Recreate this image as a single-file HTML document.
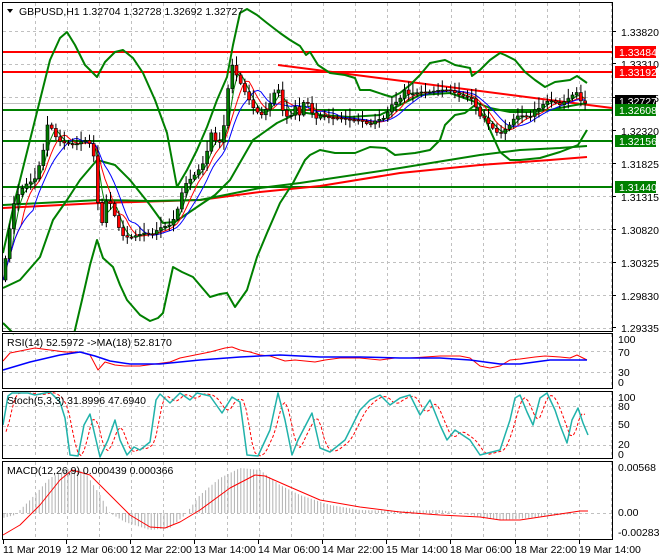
<!DOCTYPE html>
<html><head><meta charset="utf-8"><style>
body{margin:0;background:#fff;width:660px;height:560px;overflow:hidden;font-family:"Liberation Sans",sans-serif}
svg{display:block}
text{font-family:"Liberation Sans",sans-serif;font-size:10.5px;fill:#000}
</style></head><body>
<svg id="s" width="660" height="560" xmlns="http://www.w3.org/2000/svg">
<rect width="660" height="560" fill="#fff"/>
<g id="grid" stroke="#c0c0c0" stroke-dasharray="3,3" stroke-width="1"></g>
<g id="main"></g>
<g fill="none" stroke="#000" stroke-width="1">
<rect x="2.5" y="2.5" width="610" height="329"/>
<rect x="2.5" y="333.5" width="610" height="55"/>
<rect x="2.5" y="391.5" width="610" height="67"/>
<rect x="2.5" y="461.5" width="610" height="78"/>
</g>
<rect x="0" y="332" width="612" height="1" fill="#fff"/>
<polygon points="7,9 13,9 10,13" fill="#000"/>
<text x="19" y="15">GBPUSD,H1  1.32704 1.32728 1.32692 1.32727</text>
<text x="7" y="346">RSI(14) 52.5972  -&gt;MA(18) 52.8170</text>
<text x="7" y="404">Stoch(5,3,3) 31.8996 47.6940</text>
<text x="7" y="474">MACD(12,26,9) 0.000439 0.000366</text>
<g id="axis"></g>
</svg>
<script>
const S=document.getElementById('s'),NS='http://www.w3.org/2000/svg';
function el(t,a,p){const e=document.createElementNS(NS,t);for(const k in a)e.setAttribute(k,a[k]);(p||S).appendChild(e);return e}
function pl(pts,c,w,extra){const a={points:pts.map(p=>p.join(',')).join(' '),fill:'none',stroke:c,'stroke-width':w||1,'stroke-linejoin':'round'};Object.assign(a,extra||{});return el('polyline',a,document.getElementById('main'))}
function interp(pts,x){for(let i=0;i<pts.length-1;i++){if(x>=pts[i][0]&&x<=pts[i+1][0]){const t=(x-pts[i][0])/(pts[i+1][0]-pts[i][0]||1);return pts[i][1]+t*(pts[i+1][1]-pts[i][1])}}return pts[pts.length-1][1]}
const g=document.getElementById('grid');
for(let x=35;x<612;x+=32){el('line',{x1:x+.5,y1:3,x2:x+.5,y2:331},g);el('line',{x1:x+.5,y1:334,x2:x+.5,y2:388},g);el('line',{x1:x+.5,y1:392,x2:x+.5,y2:458},g);el('line',{x1:x+.5,y1:462,x2:x+.5,y2:539},g)}
[31,64,97,130,163,196,229,262,295,328].forEach(y=>el('line',{x1:3,y1:y+.5,x2:612,y2:y+.5},g));
[351,372].forEach(y=>el('line',{x1:3,y1:y+.5,x2:612,y2:y+.5},g));
[406,426,445].forEach(y=>el('line',{x1:3,y1:y+.5,x2:612,y2:y+.5},g));
el('line',{x1:3,y1:513.5,x2:612,y2:513.5},g);
const hk=[[3,518],[15,515],[30,500],[50,478],[70,468],[85,472],[100,495],[110,513],[125,522],[150,530],[170,528],[185,515],[200,495],[220,478],[240,468],[260,470],[280,485],[300,495],[330,505],[360,510],[400,511],[440,510],[470,515],[500,520],[530,518],[560,515],[588,513]];
const m=document.getElementById('main');
for(let x=4;x<=588;x+=3.2){const y=interp(hk,x);el('line',{x1:x,y1:513,x2:x,y2:y,stroke:'#b0b0b0','stroke-width':1},m)}
[[52,'#f00'],[72,'#f00']].forEach(a=>el('line',{x1:3,y1:a[0],x2:612,y2:a[0],stroke:a[1],'stroke-width':2},m));
el('line',{x1:3,y1:103.5,x2:612,y2:103.5,stroke:'#c0c0c0','stroke-width':1},m);
[110,141,187].forEach(y=>el('line',{x1:3,y1:y,x2:612,y2:y,stroke:'#008000','stroke-width':2},m));
pl([[3,208],[100,203],[200,200],[260,192],[320,186],[400,173],[480,165],[550,160],[587,157]],'#f00',2);
pl([[3,205],[100,200],[150,201],[200,200],[260,188],[300,183],[400,168],[480,155],[520,150],[560,148],[587,146]],'#008000',2);
pl([[278,65],[612,108]],'#f00',2);
pl([[3,253],[15,200],[30,140],[40,100],[50,60],[60,38],[67,32],[75,45],[85,65],[97,77],[105,62],[115,52],[123,50],[133,58],[143,73],[155,100],[167,133],[172,160],[177,187],[187,170],[197,150],[207,127],[217,100],[227,77],[233,45],[240,13],[247,9],[257,15],[267,23],[280,33],[290,40],[300,46],[306,55],[310,52],[318,65],[330,73],[345,75],[355,78],[360,90],[370,90],[385,95],[392,97],[400,93],[410,85],[420,75],[430,63],[445,60],[455,65],[470,68],[472,76],[480,70],[490,60],[500,53],[505,55],[515,60],[525,72],[535,80],[545,87],[555,82],[570,80],[577,76],[587,83]],'#008000',2);
pl([[3,323],[10,330],[14,334]],'#008000',2);
pl([[74,334],[82,300],[90,265],[97,240],[103,258],[113,267],[120,285],[127,300],[140,315],[150,321],[158,318],[163,313],[168,290],[173,267],[182,272],[193,277],[210,297],[220,294],[227,293],[235,307],[247,290],[257,257],[267,233],[280,203],[293,183],[305,160],[310,155],[320,150],[335,153],[355,153],[370,147],[385,148],[395,155],[415,153],[430,150],[440,140],[445,125],[455,115],[465,113],[475,105],[485,118],[490,130],[500,152],[510,160],[520,160],[540,158],[560,152],[578,145],[587,130]],'#008000',2);
pl([[3,288],[20,280],[40,257],[53,220],[67,200],[80,180],[97,160],[115,165],[130,180],[150,205],[163,223],[175,222],[200,205],[215,195],[230,180],[253,140],[277,123],[300,112],[320,115],[350,117],[380,115],[400,105],[420,95],[450,93],[470,100],[490,108],[510,112],[530,112],[550,110],[570,106],[587,103]],'#008000',2);
const P=[[3,280],[10,230],[15,200],[25,185],[35,180],[43,155],[48,125],[52,128],[58,140],[65,143],[75,145],[85,140],[92,145],[97,170],[100,240],[103,220],[108,195],[115,215],[122,235],[130,238],[138,235],[145,233],[152,235],[160,228],[170,225],[177,215],[180,200],[185,185],[195,175],[203,165],[208,150],[212,132],[218,145],[222,140],[227,110],[230,70],[233,65],[237,75],[242,85],[247,95],[255,110],[262,115],[270,105],[278,85],[283,110],[290,120],[295,105],[300,115],[305,100],[310,105],[315,120],[320,115],[330,118],[340,118],[350,120],[360,120],[370,125],[377,120],[385,118],[392,105],[400,100],[405,90],[410,95],[420,92],[430,92],[440,90],[450,90],[460,95],[470,98],[475,100],[478,115],[485,118],[490,125],[495,130],[500,135],[505,130],[510,125],[515,118],[520,115],[530,118],[535,110],[540,108],[545,103],[550,100],[555,102],[560,105],[567,100],[573,95],[577,92],[580,100],[585,103]];
const ma=(d)=>{const r=[];for(let x=3;x<=587;x+=3){let s=0,n=0;for(let k=0;k<d;k++){const xx=x-k*3;if(xx<3)break;s+=interp(P,xx);n++}r.push([x,s/n])}return r};
pl(ma(4),'#008000',1);pl(ma(7),'#f00',1);pl(ma(11),'#00f',1);
let prev=interp(P,3);
for(let x=4;x<=586;x+=4.2){const c=interp(P,x+2);const o=prev;const top=Math.min(o,c),bot=Math.max(o,c);const wick=2+((x*7)%9);
el('line',{x1:x+1.5,y1:top-wick,x2:x+1.5,y2:bot+wick*0.7,stroke:'#000','stroke-width':1},m);
el('rect',{x:x,y:top,width:3,height:Math.max(1,bot-top),fill:c<o?'#007a00':'#f00',stroke:'#000','stroke-width':.6},m);prev=c}
pl([[3,361],[10,353],[25,350],[35,348],[50,350],[65,352],[80,352],[90,355],[98,370],[105,362],[115,365],[125,366],[140,366],[155,364],[170,362],[180,358],[190,356],[200,354],[210,352],[225,348],[232,347],[240,350],[250,352],[260,355],[270,356],[285,361],[295,360],[305,361],[315,362],[325,360],[340,358],[360,358],[380,360],[395,358],[410,358],[425,357],[440,356],[460,356],[470,358],[480,366],[490,368],[500,366],[510,360],[520,359],[535,357],[545,356],[560,357],[570,358],[577,355],[587,360]],'#f00',1);
pl([[3,370],[30,362],[60,355],[80,352],[95,356],[110,361],[130,364],[160,364],[200,360],[240,357],[280,355],[320,357],[360,357],[400,358],[440,358],[470,360],[500,364],[520,364],[550,360],[587,360]],'#00f',1.5);
const st=[[3,425],[8,396],[12,393],[28,393],[35,395],[50,392],[60,402],[65,418],[70,455],[78,456],[84,425],[90,414],[96,440],[100,457],[108,440],[115,420],[120,440],[127,455],[134,447],[140,450],[150,442],[156,400],[160,394],[170,403],[180,393],[190,400],[197,393],[210,396],[222,413],[232,397],[240,402],[247,455],[258,456],[270,430],[278,393],[285,420],[292,455],[298,440],[312,413],[320,448],[330,452],[345,440],[360,410],[370,400],[380,395],[390,405],[400,398],[410,395],[420,415],[430,400],[440,425],[447,440],[455,430],[470,440],[480,455],[500,450],[510,420],[515,398],[520,395],[527,412],[533,425],[540,398],[547,393],[555,410],[560,425],[567,443],[572,420],[578,408],[583,423],[588,435]];
const sd=[];for(let x=6;x<=587;x+=3){sd.push([x,(interp(st,x-3)+interp(st,x-6)+interp(st,x-9))/3])}
pl(sd,'#f00',1,{'stroke-dasharray':'3,2'});
pl(st,'#20b2aa',1.5);
pl([[3,535],[20,525],[40,505],[60,480],[72,470],[90,475],[110,495],[130,515],[150,527],[165,528],[180,522],[200,510],[230,488],[255,475],[265,476],[290,487],[320,500],[360,507],[400,512],[440,515],[480,517],[500,520],[520,520],[540,517],[560,514],[580,511],[588,511]],'#f00',1);
const ax=document.getElementById('axis');
const tl=(x,y,t)=>{const e=el('text',{x:x,y:y},ax);e.textContent=t};
[[35,'1.33820'],[67,'1.33310'],[101,'1.32815'],[134,'1.32320'],[167,'1.31825'],[200,'1.31315'],[233,'1.30820'],[266,'1.30325'],[299,'1.29830'],[331,'1.29335']].forEach(a=>{tl(621,a[0]+1,a[1]);el('line',{x1:612,y1:a[0]-3.5,x2:616,y2:a[0]-3.5,stroke:'#000'},ax)});
[[52,'1.33484','#f00','#fff'],[72,'1.33192','#f00','#fff'],[101,'1.32727','#000','#fff'],[110,'1.32608','#008000','#fff'],[141,'1.32156','#008000','#fff'],[187,'1.31440','#008000','#fff']].forEach(a=>{el('rect',{x:615,y:a[0]-6,width:41,height:12,fill:a[2]},ax);const e=el('text',{x:619,y:a[0]+4,style:'fill:'+a[3]},ax);e.textContent=a[1]});
[[343,'100'],[356,'70'],[376,'30'],[386,'0'],[401,'100'],[410,'80'],[428,'50'],[448,'20'],[458,'0'],[471,'0.00568'],[516,'0.00'],[536,'-0.002832']].forEach(a=>tl(618,a[0],a[1]));
[[3,'11 Mar 2019'],[66,'12 Mar 06:00'],[130,'12 Mar 22:00'],[194,'13 Mar 14:00'],[258,'14 Mar 06:00'],[322,'14 Mar 22:00'],[386,'15 Mar 14:00'],[450,'18 Mar 06:00'],[515,'18 Mar 22:00'],[579,'19 Mar 14:00']].forEach(a=>{tl(a[0],553,a[1]);el('line',{x1:a[0]+.5,y1:540,x2:a[0]+.5,y2:544,stroke:'#000'},ax)});
</script>
</body></html>
